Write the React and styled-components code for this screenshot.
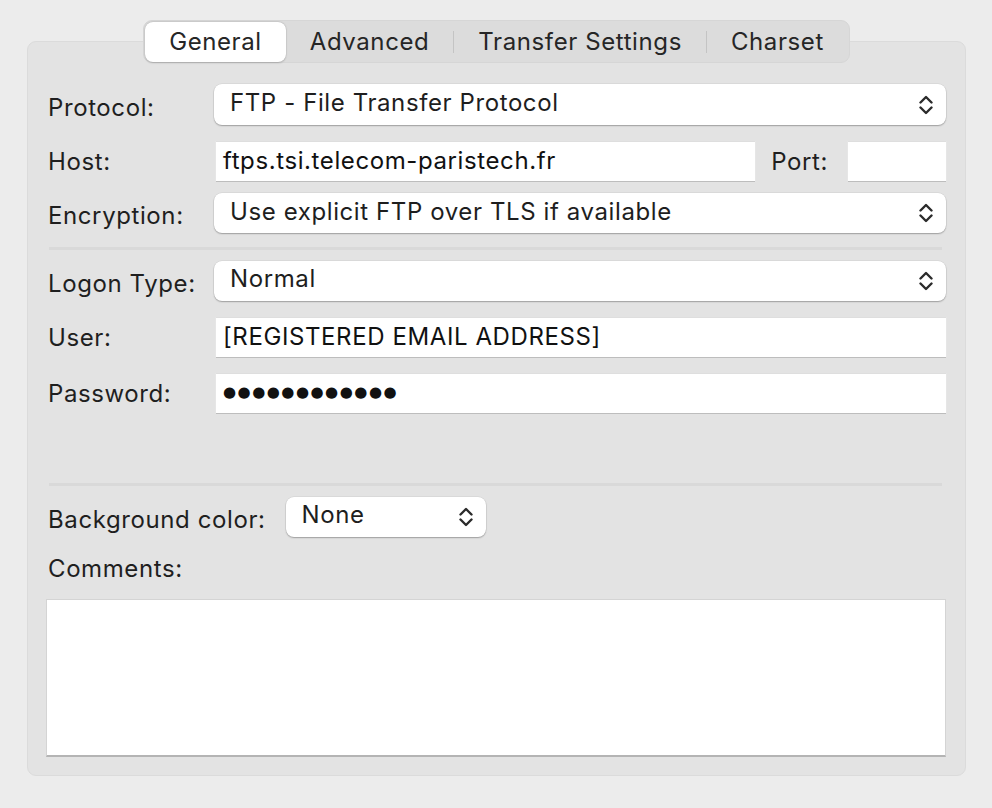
import React from 'react';
import styled, { createGlobalStyle } from 'styled-components';

const GlobalStyle = createGlobalStyle`
  html, body {
    margin: 0;
    padding: 0;
    background: #ececec;
  }
  body {
    font-family: Inter, "Noto Sans", "Liberation Sans", sans-serif;
    letter-spacing: 0.6px;
    color: #222;
  }
`;

const Page = styled.div`
  width: 992px;
  height: 808px;
  box-sizing: border-box;
  padding: 20px 26px 0 27px;
  display: flex;
  flex-direction: column;
  align-items: center;
`;

const TabBar = styled.div`
  position: relative;
  z-index: 1;
  display: flex;
  align-items: center;
  height: 43px;
  box-sizing: border-box;
  padding: 1px 1px;
  margin-bottom: -22px;
  background: #dcdcdc;
  border: 1px solid #d6d6d6;
  border-radius: 9px;
`;

const Tab = styled.div`
  height: 40px;
  display: flex;
  align-items: center;
  padding: 0 24px;
  font-size: 24px;
  color: #262626;
  border-radius: 8px;
  background: ${props => (props.$active ? '#fff' : 'transparent')};
  box-shadow: ${props =>
    props.$active ? '0 0.5px 2px rgba(0,0,0,0.2), 0 0 0 0.5px rgba(0,0,0,0.06)' : 'none'};
`;

const TabDivider = styled.span`
  width: 1px;
  height: 22px;
  background: #c4c4c4;
`;

const Panel = styled.div`
  align-self: stretch;
  box-sizing: border-box;
  height: 735px;
  padding: 42px 19px 18px 20px;
  background: #e3e3e3;
  border: 1px solid #dbdbdb;
  border-radius: 9px;
  display: flex;
  flex-direction: column;
`;

const Row = styled.div`
  display: flex;
  align-items: center;
  height: ${props => props.$h || 40}px;
  margin-top: ${props => props.$mt || 0}px;
`;

const Label = styled.div`
  flex: none;
  width: ${props => (props.$w ? `${props.$w}px` : 'auto')};
  font-size: 24px;
  line-height: 28px;
  color: #1f1f1f;
  padding-top: ${props => props.$drop || 6}px;
  white-space: nowrap;
`;

const Select = styled.div`
  flex: ${props => (props.$width ? 'none' : '1')};
  width: ${props => (props.$width ? `${props.$width}px` : 'auto')};
  height: ${props => props.$h || 40}px;
  box-sizing: border-box;
  margin-left: ${props => props.$ml || 0}px;
  display: flex;
  align-items: center;
  padding: 0 13px 0 16px;
  background: #fff;
  border-radius: 8px;
  box-shadow: 0 1px 1.5px rgba(0, 0, 0, 0.28), 0 0 0 0.5px rgba(0, 0, 0, 0.08);
`;

const SelectValue = styled.span`
  flex: 1;
  font-size: 24px;
  color: #1e1e1e;
  padding-bottom: 4px;
  white-space: nowrap;
`;

const Field = styled.div`
  flex: ${props => (props.$width ? 'none' : '1')};
  width: ${props => (props.$width ? `${props.$width}px` : 'auto')};
  height: 40px;
  box-sizing: border-box;
  margin-left: ${props => props.$ml ?? 2}px;
  display: flex;
  align-items: center;
  padding: 0 8px 2px 7px;
  background: #fff;
  border-top: 1px solid #dedede;
  box-shadow: 0 1px 0 #bdbdbd, 1px 0 0 #e6e6e6, -1px 0 0 #e6e6e6;
  font-size: 24px;
  color: #111;
  white-space: nowrap;
`;

const Dots = styled.span`
  font-family: "DejaVu Sans", sans-serif;
  font-size: 15px;
  letter-spacing: 1.5px;
  color: #111;
`;

const PortLabel = styled(Label)`
  margin: 0 20px 0 16px;
`;

const Divider = styled.div`
  height: 3px;
  background: #d9d9d9;
  margin: ${props => props.$mt}px 4px ${props => props.$mb}px 1px;
`;

const CommentsLabel = styled.div`
  font-size: 24px;
  line-height: 28px;
  margin-top: 18px;
  color: #1f1f1f;
`;

const CommentsBox = styled.div`
  height: 160px;
  box-sizing: border-box;
  margin: 16px 0 0 -2px;
  background: #fff;
  border: 1px solid #d4d4d4;
  border-bottom: 2px solid #b4b4b4;
`;

const Chevrons = () => (
  <svg width="14" height="22" viewBox="0 0 14 22" fill="none">
    <path
      d="M1.5 8.5 L7 3 L12.5 8.5 M1.5 13.5 L7 19 L12.5 13.5"
      stroke="#2b2b2b"
      strokeWidth="2.4"
      strokeLinecap="round"
      strokeLinejoin="round"
    />
  </svg>
);

const tabs = ['General', 'Advanced', 'Transfer Settings', 'Charset'];

const App = () => {
  return (
    <>
      <GlobalStyle />
      <Page>
        <TabBar>
          {tabs.map((t, i) => (
            <React.Fragment key={t}>
              {i > 1 && <TabDivider />}
              <Tab $active={i === 0}>{t}</Tab>
            </React.Fragment>
          ))}
        </TabBar>
        <Panel>
          <Row $h={41}>
            <Label $w={166}>Protocol:</Label>
            <Select $h={41}>
              <SelectValue>FTP - File Transfer Protocol</SelectValue>
              <Chevrons />
            </Select>
          </Row>
          <Row $mt={16}>
            <Label $w={166} $drop={2}>Host:</Label>
            <Field>ftps.tsi.telecom-paristech.fr</Field>
            <PortLabel $drop={2}>Port:</PortLabel>
            <Field $width={98} $ml={0} />
          </Row>
          <Row $mt={12}>
            <Label $w={166}>Encryption:</Label>
            <Select>
              <SelectValue>Use explicit FTP over TLS if available</SelectValue>
              <Chevrons />
            </Select>
          </Row>
          <Divider $mt={14} $mb={11} />
          <Row>
            <Label $w={166}>Logon Type:</Label>
            <Select>
              <SelectValue>Normal</SelectValue>
              <Chevrons />
            </Select>
          </Row>
          <Row $mt={16}>
            <Label $w={166} $drop={2}>User:</Label>
            <Field>[REGISTERED EMAIL ADDRESS]</Field>
          </Row>
          <Row $mt={16}>
            <Label $w={166} $drop={2}>Password:</Label>
            <Field>
              <Dots>●●●●●●●●●●●●</Dots>
            </Field>
          </Row>
          <Divider $mt={70} $mb={11} />
          <Row>
            <Label $drop={6}>Background color:</Label>
            <Select $width={200} $ml={20}>
              <SelectValue>None</SelectValue>
              <Chevrons />
            </Select>
          </Row>
          <CommentsLabel>Comments:</CommentsLabel>
          <CommentsBox />
        </Panel>
      </Page>
    </>
  );
};

export default App;
